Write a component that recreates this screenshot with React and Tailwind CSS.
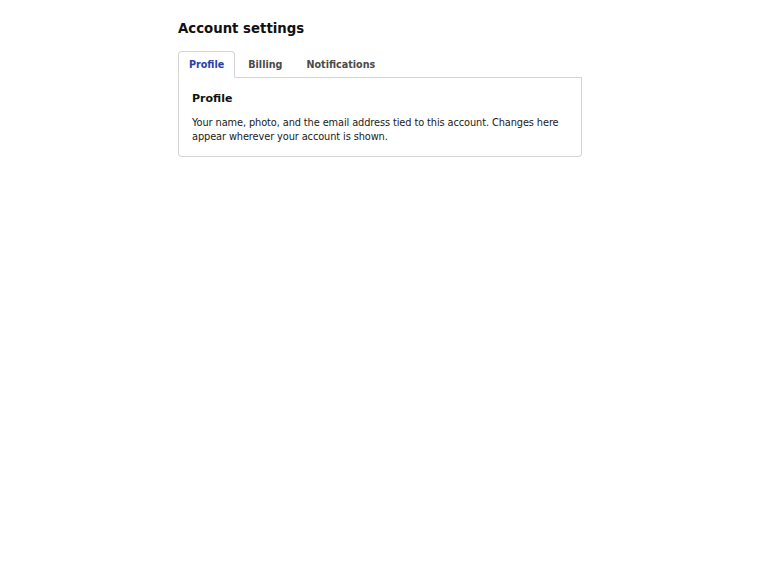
export default function App() {
  return (
    <div className="min-h-screen bg-white" style={{ fontFamily: '"DejaVu Sans", sans-serif' }}>
      <div className="ml-[178px] w-[404px] pt-[21px]">
        <h1 className="text-[13.3px] font-bold leading-[16px] text-[#111]">Account settings</h1>
        <div className="mt-[14px] flex items-end border-b border-[#d4d4d4]">
          <button className="-mb-px rounded-t-[4px] border border-b-white border-[#d4d4d4] bg-white px-[10px] pt-[6px] pb-[6px] text-[9.6px] font-bold leading-[13px] text-[#2841a8]">
            Profile
          </button>
          <button className="-mb-px border border-transparent pl-[12px] pr-[11px] pt-[6px] pb-[6px] text-[9.6px] font-bold leading-[13px] text-[#4a4a4a]">
            Billing
          </button>
          <button className="-mb-px border border-transparent pl-[11px] pr-[12px] pt-[6px] pb-[6px] text-[9.6px] font-bold leading-[13px] text-[#4a4a4a]">
            Notifications
          </button>
        </div>
        <div className="rounded-b-[4px] border border-t-0 border-[#d4d4d4] px-[13px] pt-[14px] pb-[12px]">
          <h2 className="text-[11px] font-bold leading-[14px] text-[#111]">Profile</h2>
          <p className="mt-[10px] text-[9.8px] leading-[14px] tracking-[-0.1px] text-[#1a1a1a]">
            Your name, photo, and the email address tied to this account. Changes here appear wherever your account is shown.
          </p>
        </div>
      </div>
    </div>
  );
}
